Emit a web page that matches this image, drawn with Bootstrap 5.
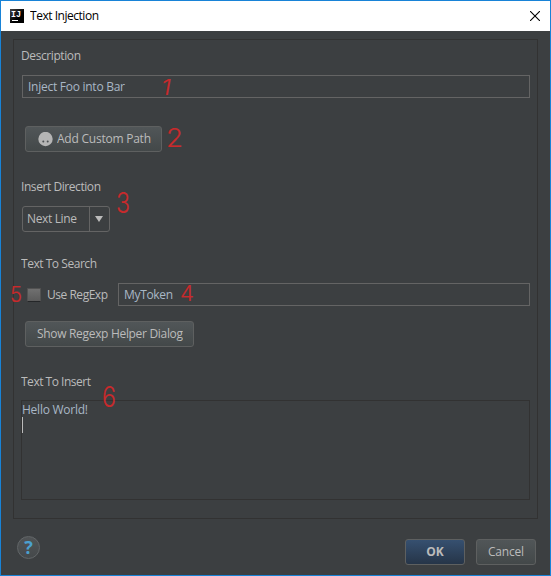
<!DOCTYPE html>
<html lang="en">
<head>
<meta charset="utf-8">
<meta name="viewport" content="width=device-width, initial-scale=1">
<title>Text Injection</title>
<link rel="stylesheet" href="https://cdn.jsdelivr.net/npm/bootstrap@5.3.0/dist/css/bootstrap.min.css">
<style>
body{margin:0;font:12px/16px "Open Sans","Noto Sans",sans-serif;color:#bbb;background:#3c3f41;overflow:hidden}
svg{flex-shrink:0}
.window{width:551px;height:576px;border:1px solid #1883d7;background:#3c3f41}
.titlebar{height:30px;background:#fff;color:#000;padding:0 10px 0 9px}
.app-icon{width:14px;height:14px;margin-right:6px;background:linear-gradient(135deg,#444,#000 60%)}
.app-icon text{font:bold 9px "Liberation Mono",monospace;fill:#fff}
.panel{margin:8px 12px 0 12px;height:480px;border:1px solid #323232;padding:8px 7px 0}
.form-control.field{width:auto;height:23px;min-height:0;margin-left:1px;padding:3px 5px 0;border:1px solid #646464;border-radius:0;background:#3c3f41;color:#a9b7c6;font-size:12px;line-height:16px}
.form-control.area{height:100px;min-height:0;border:1px solid #323232;border-radius:0;background:#3c3f41;color:#a9b7c6;padding:1px 0 0;font-size:12px;line-height:16px}
.caret{width:1px;height:16px;margin-top:-1px;background:#bbb}
.btn.dark{height:26px;padding:0;border:1px solid #5e6060;border-radius:3px;background:linear-gradient(#515658,#434849);color:#bbb;font-size:12px;line-height:16px}
.btn.ok{background:linear-gradient(#365070,#263548);font-weight:700}
.combo{width:88px;height:26px;border:1px solid #646464;border-radius:3px}
.combo-arrow{width:20px;border-left:1px solid #646464;padding-left:5px}
.check{width:14px;height:14px;margin:0 6px 0 6px;border:1px solid #525252;border-bottom-color:#242628;border-radius:1px;background:linear-gradient(#707070,#5b5b5b)}
.help{width:23px;height:23px;border:1px solid #626668;border-radius:50%;background:linear-gradient(#505355,#45494b);color:#4ba0cf;font:bold 18px/21px "Open Sans",sans-serif}
.w60{width:60px}.w137{width:137px}.w169{width:169px}
.marks{left:0;top:0;pointer-events:none}
.marks text{font-family:Inter,sans-serif;font-weight:300;fill:#c92a2c;stroke:#c92a2c;stroke-width:.2}
</style>
<script src="https://cdn.jsdelivr.net/npm/bootstrap@5.3.0/dist/js/bootstrap.bundle.min.js"></script>
</head>
<body>
<div class="window position-relative">
  <header class="titlebar d-flex align-items-center">
    <svg class="app-icon" viewBox="0 0 14 14"><text x="1" y="8" textLength="10" lengthAdjust="spacingAndGlyphs">IJ</text><path d="M2 11.5h6" stroke="#fff"/></svg>
    <svg width="71" height="16"><text y="12" textLength="69" fill="#000">Text Injection</text></svg>
    <svg class="ms-auto" width="10" height="10" viewBox="0 0 10 10"><path d="M0 0l10 10M10 0L0 10" stroke="#000" stroke-width="1.1"/></svg>
  </header>
  <main class="panel d-flex flex-column">
    <svg width="80" height="16"><text y="12" textLength="60" fill="#bbb">Description</text></svg>
    <div class="form-control field" style="margin-top:11px"><svg class="d-block" width="110" height="16"><text y="12" textLength="97" fill="#a9b7c6">Inject Foo into Bar</text></svg></div>
    <button class="btn dark w137 d-flex align-items-center" style="margin:28px 0 0 4px"><svg width="15" height="15" viewBox="0 0 15 15" style="margin:0 4px 0 12px"><circle cx="7.5" cy="7" r="7.2" fill="#b5b5b5"/><circle cx="5.3" cy="9.6" r="1" fill="#4b5052"/><circle cx="9.7" cy="9.6" r="1" fill="#4b5052"/></svg><svg width="96" height="16"><text y="12" textLength="94" fill="#bbb">Add Custom Path</text></svg></button>
    <svg width="90" height="16" style="margin-top:27px"><text y="12" textLength="80" fill="#bbb">Insert Direction</text></svg>
    <div class="combo d-flex align-items-stretch" style="margin:11px 0 0 1px"><span class="flex-grow-1 d-flex align-items-center" style="padding-left:4px"><svg width="54" height="16"><text y="12" textLength="50" fill="#bbb">Next Line</text></svg></span><span class="combo-arrow d-flex align-items-center"><svg width="8" height="6"><path d="M0 0h8L4 6z" fill="#bbb"/></svg></span></div>
    <svg width="90" height="16" style="margin-top:24px"><text y="12" textLength="76" fill="#bbb">Text To Search</text></svg>
    <div class="d-flex align-items-center" style="margin-top:11px"><span class="check"></span><svg width="70" height="16"><text y="12" textLength="61" fill="#bbb">Use RegExp</text></svg><div class="form-control field flex-grow-1"><svg class="d-block" width="60" height="16"><text y="12" textLength="49" fill="#a9b7c6">MyToken</text></svg></div></div>
    <button class="btn dark w169 d-flex align-items-center justify-content-center" style="margin:15px 0 0 4px"><svg width="146" height="16"><text y="12" textLength="146" fill="#bbb">Show Regexp Helper Dialog</text></svg></button>
    <svg width="90" height="16" style="margin-top:27px"><text y="12" textLength="70" fill="#bbb">Text To Insert</text></svg>
    <div class="form-control area" style="margin-top:10px"><svg class="d-block" width="80" height="16"><text y="12" textLength="66" fill="#a9b7c6">Hello World!</text></svg><div class="caret"></div></div>
  </main>
  <footer class="d-flex align-items-start" style="padding:17px 14px 0 16px">
    <div class="help text-center">?</div>
    <button class="btn dark ok w60 ms-auto" style="margin-top:3px">OK</button>
    <button class="btn dark w60 d-flex align-items-center justify-content-center" style="margin:3px 0 0 11px"><svg width="37" height="16"><text y="12" textLength="36" fill="#bbb">Cancel</text></svg></button>
  </footer>
  <svg class="marks position-absolute" width="549" height="574" viewBox="1 1 549 574">
    <text transform="translate(160 95) skewX(-10)" font-size="22" textLength="10" lengthAdjust="spacingAndGlyphs">1</text>
    <text transform="translate(166 147)" font-size="26" textLength="17" lengthAdjust="spacingAndGlyphs">2</text>
    <text transform="translate(116 213)" font-size="29" textLength="14" lengthAdjust="spacingAndGlyphs">3</text>
    <text transform="translate(180 301)" font-size="22" textLength="14" lengthAdjust="spacingAndGlyphs">4</text>
    <text transform="translate(10 302)" font-size="21" textLength="12" lengthAdjust="spacingAndGlyphs">5</text>
    <text transform="translate(102 407)" font-size="28" textLength="14" lengthAdjust="spacingAndGlyphs">6</text>
  </svg>
</div>
</body>
</html>
